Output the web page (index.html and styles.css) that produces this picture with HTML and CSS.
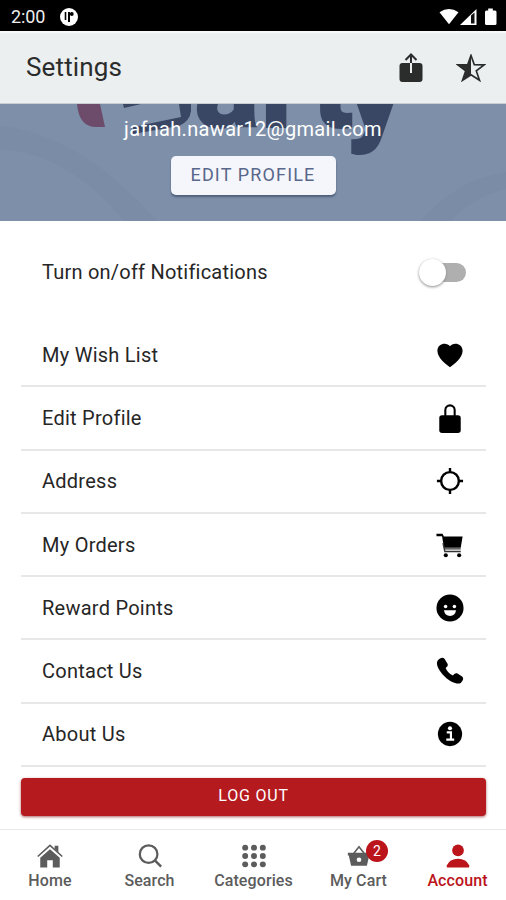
FILE: index.html
```html
<!DOCTYPE html>
<html lang="en">
<head>
<meta charset="utf-8">
<title>Settings</title>
<link rel="stylesheet" href="styles.css">
</head>
<body>
<div class="status">
  <span class="clock">2:00</span>
  <svg class="notice" width="18" height="18" viewBox="0 0 18 18"><circle cx="9" cy="9" r="9" fill="#fff"/><path d="M5.500 4v8" stroke="#000" stroke-width="1.600"/><path d="M9 14V4" stroke="#000" stroke-width="2"/><circle cx="11.800" cy="6" r="1.900"/></svg>
  <svg class="signals" width="60" height="18" viewBox="0 0 60 18"><path d="M1.500 4.200Q11 -2.200 20.500 4.200L11 16.200Z" fill="#fff"/><path d="M22 17L38.500 1v16Z" fill="#fff"/><path d="M33 7.500v8h3.500v-11Z" fill="#111"/><path d="M48 2.500h2.200V.5h4.600v2H57q1.500 0 1.500 1.500v11.500q0 1.500-1.500 1.500h-8.500q-1.500 0-1.500-1.500V4q0-1.500 1.500-1.500Z" fill="#fff"/></svg>
</div>
<header class="topbar">
  <h1>Settings</h1>
  <svg width="24" height="30" viewBox="0 0 24 30" class="share"><rect x=".5" y="10" width="23" height="19" rx="3" fill="#2b2c2c"/><path d="M12 20V10" stroke="#ebefef" stroke-width="2"/><path d="M12 10V2M6.500 7 12 1.500 17.500 7" fill="none" stroke="#2b2c2c" stroke-width="2"/></svg>
  <svg width="30" height="28" viewBox="0 0 30 28" class="star"><path d="M15 1.500 18.300 10.700 28.200 10.900 20.300 16.900 23.500 26.300 15 20.700 6.500 26.300 9.700 16.900 1.800 10.900 11.700 10.700Z" fill="none" stroke="#2b2c2c" stroke-width="1.700"/><path d="M15 1.500V20.700L6.500 26.300 9.700 16.900 1.800 10.900 11.700 10.700Z" fill="#2b2c2c"/></svg>
</header>
<section class="banner">
  <svg class="artwork" width="506" height="118" viewBox="0 0 506 118" aria-hidden="true">
    <path d="M0 22Q80 30 158 118H125Q70 50 0 45Z" fill="#7b8ca6"/>
    <path d="M167 118Q202 76 253 68V85Q219 93 197 118Z" transform="translate(253 0)" fill="#7b8ca6"/>
    <path d="M77 0h23l5 23H96Q79 23 77 0Z" fill="#6c4b6b"/>
    <path d="M123 0h18L124 4ZM179 0h12v7q-1 10-12 15l-46 8v-7l48-10Z" fill="#3a4764"/>
    <text class="mark" x="194 260 311 343" y="24">arty</text>
  </svg>
  <p class="email">jafnah.nawar12@gmail.com</p>
  <button class="edit">EDIT PROFILE</button>
</section>
<main>
  <div class="notify"><span>Turn on/off Notifications</span><i class="toggle"></i></div>
  <ul class="list">
    <li><span>My Wish List</span><svg width="30" height="30" viewBox="0 0 30 30"><path d="M15 28C11 25 1.500 18.500 1.500 10.500 1.500 2 12 1 15 5.500 18 1 28.500 2 28.500 10.500 28.500 18.500 19 25 15 28Z"/></svg></li>
    <li><span>Edit Profile</span><svg width="30" height="30" viewBox="0 0 30 30"><rect x="3.500" y="12" width="23" height="19" rx="3"/><path d="M10 13V6.500a5 5 0 0 1 10 0V13" fill="none" stroke="#000" stroke-width="2.200"/></svg></li>
    <li><span>Address</span><svg width="30" height="30" viewBox="0 0 30 30"><circle cx="15" cy="15" r="9.500" fill="none" stroke="#000" stroke-width="2.600"/><path d="M15 1v5M15 24v5M1 15h5M24 15h5" stroke="#000" stroke-width="2.600"/></svg></li>
    <li><span>My Orders</span><svg width="30" height="30" viewBox="0 0 30 30"><path d="M.5 3h6.500l1.500 3H28.500L26.500 18H8.500L6.500 5.500H.5Z"/><path d="M7.500 13 9.500 22H26.500M9 19.200h17.500" fill="none" stroke="#333" stroke-width="1.500"/><circle cx="10.500" cy="26" r="2.200"/><circle cx="24.800" cy="26" r="2.200"/></svg></li>
    <li><span>Reward Points</span><svg width="30" height="30" viewBox="0 0 30 30"><circle cx="15" cy="15" r="14.500"/><circle cx="10.300" cy="13.500" r="1.900" fill="#fff"/><circle cx="19.700" cy="13.500" r="1.900" fill="#fff"/><path d="M8.500 17.500H21.500Q20.500 23.500 15 23.500 9.500 23.500 8.500 17.500Z" fill="#fff"/></svg></li>
    <li><span>Contact Us</span><svg width="30" height="30" viewBox="0 0 30 30"><path d="M2 3.500C4.500.5 7.500-.2 9.300 2.200L12.500 7.500C13 9.300 12 10.500 10.300 11.800 12 15.500 14.500 18.200 18.200 19.900 19.800 17.800 21.300 17.100 23 17.800L28 21C30 22.800 29 25.500 26.800 27.500 24 30 16 27.800 9.300 21 2.500 14.300-.8 7 2 3.500Z"/></svg></li>
    <li><span>About Us</span><svg width="30" height="30" viewBox="0 0 30 30"><circle cx="15" cy="15" r="13"/><circle cx="15" cy="8.800" r="2.200" fill="#fff"/><path d="M11.500 13.200H16V20.800M11 21H19.500" fill="none" stroke="#fff" stroke-width="2.300"/></svg></li>
  </ul>
  <button class="logout">LOG OUT</button>
</main>
<nav class="tabs">
  <a><svg width="28" height="28" viewBox="0 0 28 28"><path d="M3.500 16 14 6.800 24.500 16V26.500H17V18.500H11V26.500H3.500Z"/><path d="M.8 14.500 14 2.500 27.200 14.500" fill="none" stroke="#5c5c5c" stroke-width="1.700"/><path d="M19 3h4v7l-4-3.500Z"/></svg>Home</a>
  <a><svg width="28" height="28" viewBox="0 0 28 28"><circle cx="12.500" cy="12" r="9.500" fill="none" stroke="#5c5c5c" stroke-width="2.400"/><path d="M19 18.500 26 25.500" stroke="#5c5c5c" stroke-width="2.700"/></svg>Search</a>
  <a><svg width="28" height="28" viewBox="0 0 28 28"><circle cx="4.500" cy="5" r="3.200"/><circle cx="14" cy="5" r="3.200"/><circle cx="23.500" cy="5" r="3.200"/><circle cx="4.500" cy="14" r="3.200"/><circle cx="14" cy="14" r="3.200"/><circle cx="23.500" cy="14" r="3.200"/><circle cx="4.500" cy="23" r="3.200"/><circle cx="14" cy="23" r="3.200"/><circle cx="23.500" cy="23" r="3.200"/></svg>Categories</a>
  <a><svg width="28" height="28" viewBox="0 0 28 28"><path d="M2 10.500H26V13.500H25L22.500 24.500H5.500L3 13.500H2Z"/><path d="M8.500 11 14 4 19.500 11" fill="none" stroke="#5c5c5c" stroke-width="1.700"/><circle cx="14" cy="18" r="2.500" fill="#fff"/></svg>My Cart<b class="badge">2</b></a>
  <a class="active"><svg width="28" height="28" viewBox="0 0 28 28"><circle cx="14" cy="8" r="6.300"/><path d="M2 26.500V24Q5 17 14 17T26 24V26.500Z"/></svg>Account</a>
</nav>
</body>
</html>
```
FILE: styles.css
```css
* { box-sizing: border-box; }
body { margin: 0; width: 506px; height: 900px; display: flex; flex-direction: column; overflow: hidden; background: #fff; font-family: Roboto, sans-serif; color: #262626; }
svg { display: block; flex: none; }
button { font-family: inherit; border: 0; padding: 0; }
.status { height: 31px; flex: none; background: #000; color: #eee; display: flex; align-items: center; padding: 2px 8px 0 11px; }
.clock { width: 49px; font-size: 18px; letter-spacing: -.1px; }
.signals { margin-left: auto; }
.topbar { height: 73px; flex: none; display: flex; align-items: center; padding: 0 20px 0 26px; background: #ebefef; border-top: 2px solid #f8fafa; border-bottom: 1px solid #c9ced3; }
h1 { flex: 1; margin: 0 0 2px; font-size: 26px; font-weight: 400; letter-spacing: .15px; color: #2b2c2c; }
.share { margin-right: 33px; }
.banner { height: 117px; flex: none; position: relative; background: #7e8fa9; display: flex; flex-direction: column; align-items: center; overflow: hidden; }
.artwork { position: absolute; left: 0; top: 0; }
.mark { font-family: Roboto, sans-serif; font-size: 124px; font-weight: 900; fill: #3a4764; }
.email { position: relative; margin: 13px 0 15px; font-size: 20px; line-height: 24px; letter-spacing: .33px; color: #fff; white-space: nowrap; }
.edit { position: relative; width: 165px; height: 39px; border-radius: 5px; background: #f4f6fb; color: #59678a; font-size: 18px; line-height: 37px; padding-bottom: 2px; letter-spacing: 1.15px; box-shadow: 0 2px 2px #4f5f7b; }
main { height: 608px; flex: none; padding: 19px 20px 0 21px; }
.notify { height: 64px; display: flex; align-items: center; justify-content: space-between; padding: 0 20px 0 21px; font-size: 20px; letter-spacing: .22px; }
.toggle { width: 46px; height: 19px; border-radius: 10px; background: linear-gradient(90deg, transparent 14px, #afafaf 14px); position: relative; }
.toggle::before { content: ""; position: absolute; left: -1px; top: -4px; width: 27px; height: 27px; border-radius: 50%; background: #fff; box-shadow: 0 1px 3px #888; }
.list { list-style: none; margin: 20px 0 0; padding: 0; }
.list li { height: 63.300px; display: flex; align-items: center; justify-content: space-between; padding: 0 22px 0 21px; border-bottom: 2px solid #e7e7e7; font-size: 20px; letter-spacing: .25px; }
.list svg { width: 28px; height: 28px; overflow: visible; }
.logout { display: block; width: 465px; height: 38px; margin-top: 11px; border-radius: 4px; background: #b51a1f; color: #fff; font-size: 16px; line-height: 36px; padding-bottom: 2px; letter-spacing: .8px; box-shadow: 0 1px 3px #a66; }
.tabs { height: 71px; flex: none; border-top: 1px solid #e8e8ea; display: grid; grid-template-columns: 100px 99px 109px 101px 97px; color: #5c5c5c; fill: #5c5c5c; }
.tabs a { position: relative; display: flex; flex-direction: column; align-items: center; padding-top: 13px; font-size: 16px; line-height: 20px; font-weight: 500; white-space: nowrap; letter-spacing: .1px; }
.tabs svg { width: 26px; height: 26px; margin-bottom: 2px; }
.tabs .active { color: #bb141b; fill: #bb141b; }
.badge { position: absolute; left: 58px; top: 10px; width: 22px; height: 22px; border-radius: 50%; background: #bb141b; color: #fff; text-align: center; line-height: 22px; font-size: 14px; font-weight: 400; }
```
